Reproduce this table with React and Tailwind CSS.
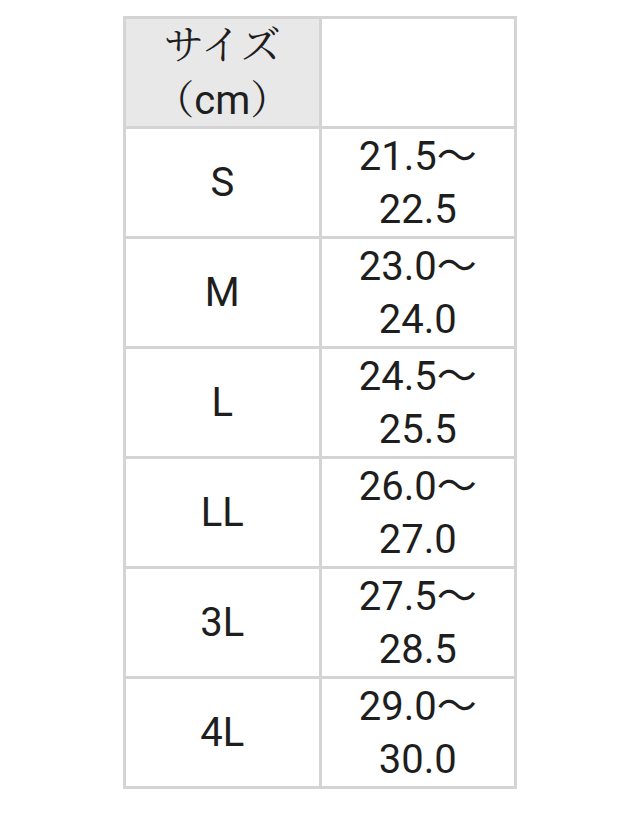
import { Fragment } from "react";

export default function App() {
  const rows = [
    ["S", "21.5～", "22.5"],
    ["M", "23.0～", "24.0"],
    ["L", "24.5～", "25.5"],
    ["LL", "26.0～", "27.0"],
    ["3L", "27.5～", "28.5"],
    ["4L", "29.0～", "30.0"],
  ];
  const cell =
    "h-[110px] border-r-[3px] border-b-[3px] border-[#d4d4d4] flex flex-col items-center justify-center text-center";
  return (
    <div className="w-[640px] h-[831px] bg-white pt-[16px]">
      <div className="mx-auto w-[394px] grid grid-cols-2 border-l-[3px] border-t-[3px] border-[#d4d4d4] text-[#1e1e1e] text-[40px] leading-[53px] font-['Roboto','Noto_Sans_CJK_JP',sans-serif]">
        <div className={cell + " bg-[#e8e8e8]"}>
          <div className="font-['Noto_Serif_CJK_JP','Liberation_Serif','Noto_Sans_CJK_JP',serif] -mt-[4px] mb-[2px]">
            サイズ
          </div>
          <div>
            <span className="font-['Noto_Serif_CJK_JP','Liberation_Serif','Noto_Sans_CJK_JP',serif]">（</span>
            cm
            <span className="font-['Noto_Serif_CJK_JP','Liberation_Serif','Noto_Sans_CJK_JP',serif]">）</span>
          </div>
        </div>
        <div className={cell}></div>
        {rows.map(([s, a, b]) => (
          <Fragment key={s}>
            <div className={cell}>{s}</div>
            <div className={cell}>
              <div>{a}</div>
              <div>{b}</div>
            </div>
          </Fragment>
        ))}
      </div>
    </div>
  );
}
